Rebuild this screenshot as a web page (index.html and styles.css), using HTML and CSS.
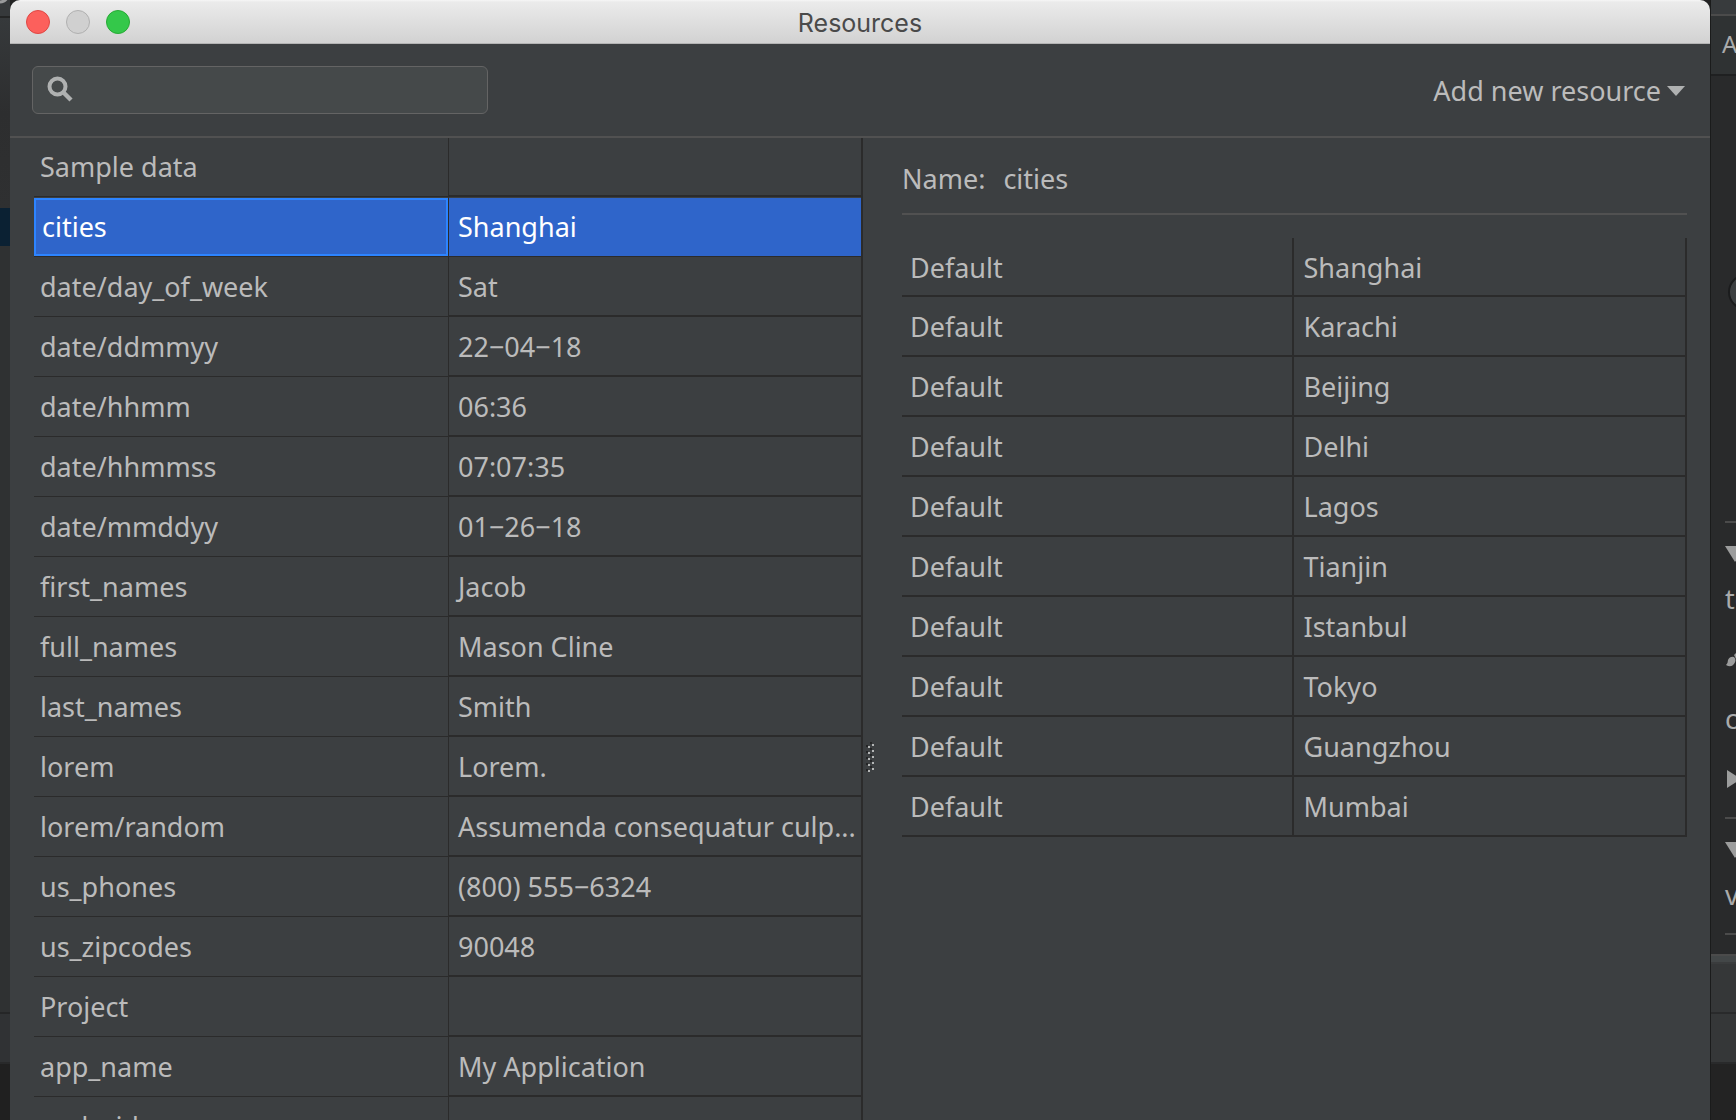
FILE: index.html
```html
<!DOCTYPE html>
<html lang="en">
<head>
<meta charset="utf-8">
<title>Resources</title>
<link rel="stylesheet" href="styles.css">
</head>
<body>
<div class="desktop">
  <aside class="ide-left">
    <div class="ide-bar"><svg class="ide-glyph" width="10" height="6" viewBox="0 0 10 6"><path d="M-4 2Q4 3 7-2" fill="none" stroke="#9a9b9c" stroke-width="3"/></svg></div>
    <div class="ide-tree"></div>
    <div class="ide-picked"></div>
    <div class="ide-body"></div>
    <div class="ide-status"></div>
    <div class="ide-floor"></div>
  </aside>

  <main class="window">
    <header class="titlebar">
      <div class="lights">
        <button class="light close" aria-label="Close"></button>
        <button class="light minimize" aria-label="Minimize" disabled></button>
        <button class="light zoom" aria-label="Zoom"></button>
      </div>
      <h1 class="title">Resources</h1>
    </header>

    <div class="toolbar">
      <label class="search">
        <svg class="search-icon" width="26" height="26" viewBox="0 0 26 26"><circle cx="10.500" cy="10.500" r="8" fill="none" stroke="#afb1b1" stroke-width="4"/><path d="M16 16L24 24" stroke="#afb1b1" stroke-width="4.500"/></svg>
        <input class="search-input" type="text" aria-label="Search resources">
      </label>
      <button class="add">Add new resource<svg width="18" height="10" viewBox="0 0 18 10"><path d="M0 0H18L9 10Z" fill="#afb1b1"/></svg></button>
    </div>

    <div class="panes">
      <section class="list">
        <table class="resources">
          <colgroup><col class="col-name"><col></colgroup>
          <tbody>
            <tr class="group"><td>Sample data</td><td></td></tr>
            <tr class="selected"><td>cities</td><td>Shanghai</td></tr>
            <tr><td>date/day_of_week</td><td>Sat</td></tr>
            <tr><td>date/ddmmyy</td><td>22−04−18</td></tr>
            <tr><td>date/hhmm</td><td>06:36</td></tr>
            <tr><td>date/hhmmss</td><td>07:07:35</td></tr>
            <tr><td>date/mmddyy</td><td>01−26−18</td></tr>
            <tr><td>first_names</td><td>Jacob</td></tr>
            <tr><td>full_names</td><td>Mason Cline</td></tr>
            <tr><td>last_names</td><td>Smith</td></tr>
            <tr><td>lorem</td><td>Lorem.</td></tr>
            <tr><td>lorem/random</td><td>Assumenda consequatur culp...</td></tr>
            <tr><td>us_phones</td><td>(800) 555−6324</td></tr>
            <tr><td>us_zipcodes</td><td>90048</td></tr>
            <tr class="group"><td>Project</td><td></td></tr>
            <tr><td>app_name</td><td>My Application</td></tr>
            <tr class="group"><td>android</td><td></td></tr>
          </tbody>
        </table>
      </section>

      <div class="splitter">
        <svg width="8" height="30" viewBox="0 0 8 30"><defs><pattern id="grip" width="8" height="6" patternUnits="userSpaceOnUse"><path d="M4 0h2v2h-2zM0 3h2v2h-2z" fill="#242526"/><path d="M6 2h2v2h-2zM2 4h2v2h-2z" fill="#b4b6b6"/></pattern></defs><rect width="8" height="30" fill="url(#grip)"/></svg>
      </div>

      <section class="detail">
        <div class="name"><span>Name:</span><span>cities</span></div>
        <table class="values">
          <tbody>
            <tr><td>Default</td><td>Shanghai</td></tr>
            <tr><td>Default</td><td>Karachi</td></tr>
            <tr><td>Default</td><td>Beijing</td></tr>
            <tr><td>Default</td><td>Delhi</td></tr>
            <tr><td>Default</td><td>Lagos</td></tr>
            <tr><td>Default</td><td>Tianjin</td></tr>
            <tr><td>Default</td><td>Istanbul</td></tr>
            <tr><td>Default</td><td>Tokyo</td></tr>
            <tr><td>Default</td><td>Guangzhou</td></tr>
            <tr><td>Default</td><td>Mumbai</td></tr>
          </tbody>
        </table>
      </section>
    </div>
  </main>

  <aside class="ide-right">
    <div class="attr-top"></div>
    <div class="attr-head">A</div>
    <div class="attr-view">
      <svg width="20" height="36" viewBox="0 0 20 36"><circle cx="18" cy="18" r="17" fill="#3c3f41" stroke="#1b1c1d" stroke-width="2"/><path d="M11 15h8M11 20h8" stroke="#77797a" stroke-width="2"/></svg>
    </div>
    <div class="attr-group">
      <svg class="toggle" width="20" height="16" viewBox="0 0 20 16"><path d="M0 0H20L10 16Z" fill="#9c9d9d"/></svg>
      <span class="attr-row">te</span>
      <span class="attr-row"><svg width="20" height="16" viewBox="0 0 20 16"><path d="M1 14Q3 12 3 9Q5 5 9 6Q12 9 9 13Q6 17 1 14ZM9 4L14-1V6L11 8Z" fill="#9c9d9d"/></svg></span>
      <span class="attr-row">co</span>
      <span class="attr-row"><svg width="20" height="18" viewBox="0 0 20 18"><path d="M2 0L16 9L2 18Z" fill="#9c9d9d"/></svg></span>
    </div>
    <div class="attr-group attr-last">
      <svg class="toggle" width="20" height="16" viewBox="0 0 20 16"><path d="M0 0H20L10 16Z" fill="#9c9d9d"/></svg>
      <span class="attr-row">vi</span>
    </div>
    <div class="attr-end"></div>
    <div class="attr-edge"></div>
    <div class="attr-status"></div>
    <div class="attr-status"></div>
    <div class="attr-floor"></div>
  </aside>
</div>
</body>
</html>
```
FILE: styles.css
```css
* { box-sizing: border-box; }

body {
  margin: 0;
  background: #232323;
  color: #bbbbbb;
  font-family: "Noto Sans", "Open Sans", sans-serif;
  font-size: 27px;
  line-height: 36px;
}

.desktop {
  display: grid;
  grid-template-columns: 10px minmax(0, 1fr) 26px;
  height: 100vh;
  overflow: hidden;
}

button, input { font: inherit; color: inherit; }

/* IDE strip left of the window */
.ide-left {
  display: flex;
  flex-direction: column;
  overflow: hidden;
  background: #313335;
}
.ide-bar { height: 18px; background: #36393b; border-bottom: 2px solid #242525; }
.ide-glyph { display: block; }
.ide-tree { height: 190px; background: linear-gradient(#36393b, #2d2e2f 50%, #2f3031); }
.ide-picked { height: 38px; background: #0b2133; }
.ide-body { height: 768px; background: #2f3132; border-bottom: 2px solid #252627; }
.ide-status { height: 50px; background: #303234; border-bottom: 2px solid #28292a; }
.ide-floor { flex: 1; background: #202020; }

/* Window */
.window {
  display: flex;
  flex-direction: column;
  min-height: 0;
  background: #3c3f41;
  border-radius: 10px 10px 0 0;
  overflow: hidden;
}

.titlebar {
  display: grid;
  grid-template-columns: 1fr auto 1fr;
  align-items: center;
  flex: none;
  height: 44px;
  padding: 0 16px;
  background: linear-gradient(#f6f6f6, #ebebeb 2px, #d2d2d2);
  border-bottom: 1px solid #b4b4b4;
}
.lights { display: flex; gap: 16px; }
.light {
  width: 24px;
  height: 24px;
  padding: 0;
  border: 1px solid;
  border-radius: 50%;
}
.close { background: #fc605c; border-color: #df4744; }
.minimize { background: #d0d0d0; border-color: #b0b0b0; }
.zoom { background: #34c84a; border-color: #27aa35; }
.title {
  margin: 0;
  padding-top: 2px;
  color: #4a4a4a;
  font-family: Inter, Roboto, sans-serif;
  font-size: 25px;
  font-weight: 400;
  line-height: 36px;
}

.toolbar {
  display: flex;
  align-items: center;
  justify-content: space-between;
  flex: none;
  height: 94px;
  padding: 0 25px 0 22px;
  border-bottom: 2px solid #515151;
}
.search {
  display: flex;
  align-items: center;
  gap: 10px;
  width: 456px;
  height: 48px;
  padding: 0 14px 2px;
  background: #45494a;
  border: 1px solid #646464;
  border-radius: 6px;
}
.search-icon { flex: none; }
.search-input {
  flex: 1;
  min-width: 0;
  padding: 0;
  border: 0;
  outline: 0;
  background: transparent;
}
.add {
  display: flex;
  align-items: center;
  gap: 6px;
  padding: 2px 0 0;
  border: 0;
  background: none;
}

.panes {
  display: grid;
  grid-template-columns: 853px 15px minmax(0, 1fr);
  flex: 1;
  min-height: 0;
}

table {
  width: 100%;
  border-collapse: separate;
  border-spacing: 0;
  table-layout: fixed;
}
td {
  height: 60px;
  padding: 2px 10px 0;
  white-space: nowrap;
  overflow: hidden;
  border-bottom: 2px solid #2b2b2b;
}

/* Resource list */
.list {
  min-height: 0;
  padding-left: 24px;
  overflow: hidden;
  border-right: 2px solid #2b2b2b;
}
.col-name { width: 415px; }
.resources td { padding: 2px 4px 0 9px; }
.resources td:first-child {
  padding-top: 1px;
  padding-left: 6px;
  border-right: 1px solid #2b2b2b;
  border-bottom-width: 1px;
}
.resources tr:first-child td { height: 59px; padding-top: 0; }
.resources .selected td {
  padding-top: 0;
  background: #2f65ca;
  color: #ffffff;
  border-top: 1px solid #3c3f41;
  border-bottom-width: 1px;
}
.resources .selected td:first-child {
  padding-left: 8px;
  box-shadow: inset 0 0 0 2px #2d84ff;
}

.splitter {
  display: flex;
  align-items: center;
  padding: 256px 0 0 3px;
}

/* Selected resource */
.detail { padding: 0 23px 0 24px; }
.name {
  display: flex;
  align-items: center;
  gap: 18px;
  height: 77px;
  margin-bottom: 23px;
  padding-top: 6px;
  border-bottom: 2px solid #515151;
}
.values { border-right: 2px solid #2b2b2b; }
.values td:first-child { padding-left: 8px; border-right: 2px solid #2b2b2b; }
.values tr:first-child td { height: 59px; }

/* IDE attributes strip right of the window */
.ide-right {
  display: flex;
  flex-direction: column;
  overflow: hidden;
  background: #292a2b;
  border-left: 1px solid #1a1b1b;
  color: #aaabab;
}
.ide-right > div { flex: none; }
.attr-top { height: 16px; background: #383b3d; border-bottom: 2px solid #4b4b4b; }
.attr-head {
  height: 60px;
  padding: 10px 0 0 11px;
  background: #2f3233;
  border-bottom: 2px solid #1f2021;
  font-size: 24px;
}
.attr-view { height: 445px; padding: 198px 0 0 17px; }
.attr-view svg { display: block; }
.attr-group {
  display: flex;
  flex-direction: column;
  height: 296px;
  margin-left: 14px;
  padding-top: 23px;
  border-top: 2px solid #4b4b4b;
}
.toggle { flex: none; margin-bottom: 7px; }
.attr-row {
  display: flex;
  align-items: center;
  flex: none;
  height: 60px;
}
.attr-row svg { flex: none; }
.attr-group.attr-last { height: 116px; }
.attr-end { height: 21px; margin-left: 14px; border-top: 2px solid #4b4b4b; }
.attr-edge { height: 10px; background: #434748; border-top: 2px solid #4b4b4b; border-bottom: 2px solid #3a3c3d; }
.attr-status { height: 50px; background: #353738; border-bottom: 2px solid #292a2b; }
.ide-right > .attr-floor { flex: 1; background: #232323; }
```
